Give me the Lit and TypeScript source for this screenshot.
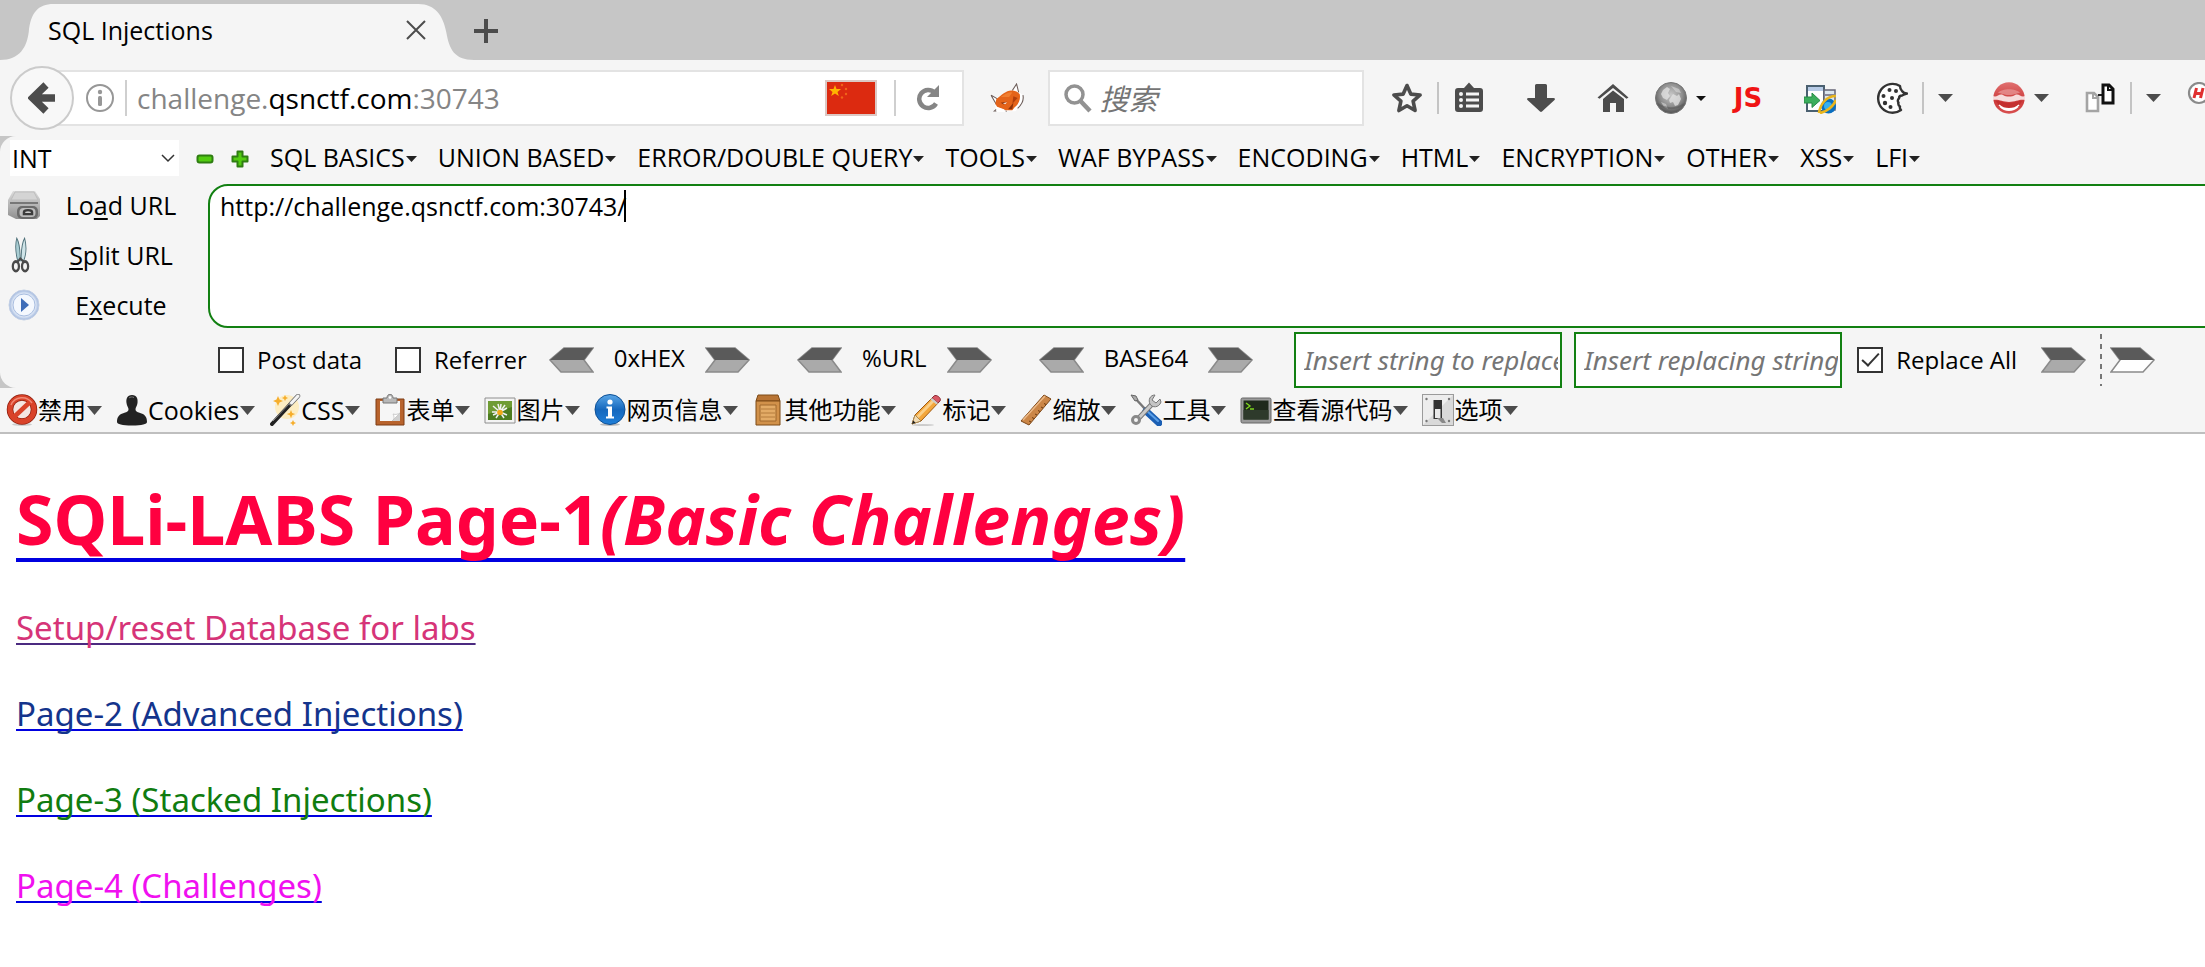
import { LitElement, html, svg, css } from 'lit';
import { customElement, state } from 'lit/decorators.js';

const icons: Record<string, unknown> = {
  star: svg`<path d="M16 3.5l3.8 8.6 9.3.9-7 6.2 2 9.3-8.1-4.8-8.1 4.8 2-9.3-7-6.2 9.3-.9z" fill="none" stroke="#4c4c4c" stroke-width="3.6" stroke-linejoin="round"/>`,
  clipboard: svg`<path d="M5 6h6l5-5.500 5 5.500h6a3 3 0 0 1 3 3v18a3 3 0 0 1-3 3H5a3 3 0 0 1-3-3V9a3 3 0 0 1 3-3z" fill="#4c4c4c"/><g fill="#f5f5f5"><circle cx="8" cy="12" r="2"/><circle cx="8" cy="18" r="2"/><circle cx="8" cy="24" r="2"/><path d="M13 10.500h13v3H13zM13 16.500h13v3H13zM13 22.500h13v3H13z"/></g>`,
  down: svg`<path d="M11.500 2h9a1.500 1.500 0 0 1 1.500 1.500V16h6.500c1.500 0 2 1 1 2L17 29.500c-.6.6-1.400.6-2 0L2.500 18c-1-1-.5-2 1-2H10V3.500A1.500 1.500 0 0 1 11.500 2z" fill="#4c4c4c"/>`,
  home: svg`<path d="M16 2L.5 15.500l2 1.300L16 6l13.500 10.800 2-1.300z" fill="#4c4c4c"/><path d="M16 8.500L6 17v13h7v-9h6v9h8V17z" fill="#4c4c4c"/>`,
  globe: svg`<defs><radialGradient id="gg" cx=".5" cy=".4" r=".6"><stop offset="0" stop-color="#c8c8c8"/><stop offset=".6" stop-color="#8f8f8f"/><stop offset="1" stop-color="#505050"/></radialGradient></defs><circle cx="16" cy="16" r="15.500" fill="url(#gg)" stroke="#777"/><path d="M8 8l4-3 3 2-2 4 2 3-3 4-4-2-2-4zM18 12l4 2 2-2 2 5-3 6-3 1-2-4-3 1-1-3z" fill="#e4e4e4" opacity=".75"/><path d="M16 4l8 3 2 4-5-1zM6 20l5 2 2 5-4-2z" fill="#d8d8d8" opacity=".6"/><path d="M3 22c7 5 18 6 26 0" stroke="#555" stroke-width="2" fill="none" opacity=".5"/>`,
  window: svg`<rect x="3" y="4" width="17" height="25" fill="#fff" stroke="#4a6070" stroke-width="2"/><rect x="4" y="5" width="15" height="4" fill="#b7cbe6"/><rect x="20" y="8" width="11" height="20" fill="#dbe6ee" stroke="#667" stroke-width="1.500"/><path d="M21 12h9v2h-9z" fill="#889"/><path d="M0 15h8v-4l8 7.500-8 7V21H0z" fill="#3cae5c" stroke="#278a45"/><circle cx="24.500" cy="24" r="7.500" fill="#0a6fc0"/><circle cx="24" cy="24" r="4" fill="#35b0f0"/><path d="M15 31C16 23 22 14 32 14M16 31c6-1 13-6 16-13" stroke="#e9b51c" stroke-width="2.600" fill="none"/>`,
  cookie: svg`<path d="M24 4A14.400 14.400 0 1 0 25 28c-1-1-1.500-2-1-3.500-1.500-1-2-2.500-1.500-4-1-1-1-3 .5-4 0-2 1.500-3 3-3 1.500-1 3.500-1.500 5-2-2 0-4-1-5-2.500-1-1-2-3-2-5z" fill="#fff" stroke="#333" stroke-width="2.400" stroke-linejoin="round"/><g fill="#333"><circle cx="13.500" cy="8" r="2"/><circle cx="20" cy="9" r="2"/><circle cx="7.500" cy="14" r="2"/><circle cx="16" cy="16" r="2"/><circle cx="9" cy="21" r="2.200"/><circle cx="14.500" cy="25" r="2"/></g>`,
  redface: svg`<defs><linearGradient id="rg" x1="0" y1="0" x2="0" y2="1"><stop offset="0" stop-color="#e07070"/><stop offset=".6" stop-color="#cc3a3a"/><stop offset="1" stop-color="#d85050"/></linearGradient></defs><circle cx="16" cy="16" r="15.700" fill="url(#rg)"/><path d="M0 14c4 2 6-3 10-1 3 2 9 2 12 0 4-2 6 3 10 1v4c-6-1-9 2-16 2S6 17 0 18z" fill="#f6dcdc"/><path d="M5 11c4-5 18-5 22 0-4 0-5 2-11 2S9 11 5 11z" fill="#e89a9a" opacity=".7"/><path d="M3 19c6 0 8 2 13 2s7-2 13-2c-3 6-8 8-13 8S6 25 3 19z" fill="#c42f2f"/><path d="M6 23c5 5 15 5 20 0M7 24.500c5 5 13 5 18 0" stroke="#fff" stroke-width="1.400" fill="none"/>`,
  pages: svg`<path d="M3 11h7l4 4v14H3z" fill="#fff" stroke="#a4a4a4" stroke-width="2.600"/><path d="M9 11v5h5" fill="none" stroke="#a4a4a4" stroke-width="2"/><path d="M14 13h6" stroke="#222" stroke-width="2"/><path d="M19 3h6l4 4v14H19z" fill="#fff" stroke="#111" stroke-width="3"/><path d="M24 3v5h5" fill="none" stroke="#111" stroke-width="2"/>`,
  hackmag: svg`<path d="M19 19l10 10" stroke="#445" stroke-width="4"/><circle cx="12" cy="11" r="10" fill="#fff" stroke="#8a8a8a" stroke-width="2.200"/><path d="M9.500 6L7 16M16 6l-2.500 10M8.500 11.500h7" stroke="#e03030" stroke-width="3" fill="none"/>`,
  fox: svg`<path d="M1 13l5 3 7-5 8-4 4-6 3 9 3 3-1 9-6 8H6l-1-6z" fill="#fff"/><path d="M1 13l6 4M1 13l5 10M21 8l4-7 2 9M31 13c1 5-1 10-5 14M6 28l-2 2h12" fill="none" stroke="#6b5c58"/><path d="M6 17c5-4 9-9 14-9 3 0 6 1 8 4 1 5-1 11-5 14l-2 3h-6l-8-3-2-4z" fill="#e4641a"/><path d="M10 15c4-3 7-6 11-5l-3 5z" fill="#f07e30"/><path d="M22 14l-1 8 5-6z" fill="#b03e0c"/><path d="M17 28l5-7-1 7zM10 21l6-1-3 3z" fill="#8d3209"/><path d="M12 21.500l4-1-1.500 2z" fill="#fff"/><path d="M6 25l7 3 2 3H6z" fill="#fff"/>`,
  loader: svg`<defs><linearGradient id="lg" x1="0" y1="0" x2="0" y2="1"><stop offset="0" stop-color="#dcdcdc"/><stop offset="1" stop-color="#8f8f8f"/></linearGradient></defs><path d="M5 2h22l5 8v17l-3 3H8l-8-4V11z" fill="url(#lg)"/><path d="M7 3h19l4 8H3z" fill="#d4d4d4" stroke="#bdbdbd"/><path d="M2 14h28" stroke="#777" stroke-width="2"/><rect x="9" y="17" width="21" height="13" rx="5" fill="#6a6a6a"/><rect x="11.500" y="19" width="16" height="9" rx="4" fill="#bdbdbd"/><path d="M16 25v-2c0-2.500 8-2.500 8 0v2z" stroke="#3c3c3c" stroke-width="2.500" fill="#fff"/>`,
  scissors: svg`<path d="M10 1c3 4 4 11 4 20h-3C9 15 8 7 10 1z" fill="#a9cdd3" stroke="#4d6f78"/><path d="M19 1c-3 4-4 11-4 20h3c3-6 3-14 1-20z" fill="#cfe4e8" stroke="#4d6f78"/><ellipse cx="9" cy="26" rx="3.500" ry="4.300" fill="none" stroke="#4a4a4a" stroke-width="2.600"/><ellipse cx="19.500" cy="26" rx="3.500" ry="4.300" fill="none" stroke="#4a4a4a" stroke-width="2.600"/><path d="M11 22l3-3 4 3" stroke="#4a4a4a" stroke-width="2" fill="none"/>`,
  play: svg`<defs><radialGradient id="pg"><stop offset=".5" stop-color="#fff"/><stop offset=".8" stop-color="#d7e2f3"/><stop offset="1" stop-color="#9db4db"/></radialGradient></defs><circle cx="16" cy="16" r="15" fill="url(#pg)" stroke="#c3d0e6"/><circle cx="16" cy="16" r="11" fill="#f4f8fe" stroke="#a8bde0"/><path d="M13 9l8 7-8 7z" fill="#3d6cb8"/>`,
  ban: svg`<ellipse cx="16" cy="30.500" rx="10" ry="1.500" fill="#ccc"/><circle cx="16" cy="15.500" r="12" fill="#f4e6e2" stroke="#8f1d0c" stroke-width="6.500"/><circle cx="16" cy="15.500" r="12" fill="none" stroke="#d9432a" stroke-width="5"/><path d="M24 8L8 23" stroke="#d9432a" stroke-width="4.500"/><path d="M5 11a12 12 0 0 1 21-2" stroke="#f08a76" stroke-width="1.500" fill="none"/>`,
  person: svg`<path d="M16 1c5 0 6 4 5.500 8-.4 3-1.800 4-2 6 0 3 2 3 6 4.500 4 1.500 5.500 4 5.500 8.500 0 2-5 3.500-15 3.500S1 30 1 28c0-4.500 1.500-7 5.500-8.500 4-1.500 6-1.500 6-4.500-.2-2-1.600-3-2-6C10 5 11 1 16 1z" fill="#222"/><path d="M13 4c1-1 3-1.500 5-.5" stroke="#777" fill="none"/>`,
  wand: svg`<circle cx="18" cy="13" r="12" fill="#ffe9b0" opacity=".75"/><path d="M9 2l1.500 3.500L14 7l-3.500 1.500L9 12 7.500 8.500 4 7l3.500-1.500zM22 16l1.200 3 3 1-3 1.200-1.200 3-1.200-3-3-1.200 3-1zM16 1l1 2 2 1-2 1-1 2-1-2-2-1 2-1zM24 26l1 2 2 1-2 1-1 2-1-2-2-1 2-1z" fill="#f6ae2d"/><path d="M3 30L28 3" stroke="#222" stroke-width="4" stroke-linecap="round"/><path d="M22 9.500L29 2" stroke="#777" stroke-width="4.500" stroke-linecap="round"/><path d="M22.500 9L29 2" stroke="#f4f4f4" stroke-width="3" stroke-linecap="round"/><path d="M4 27L21 9" stroke="#888" stroke-width="1"/>`,
  form: svg`<path d="M2 5h28v26H2z" fill="#b8632c" stroke="#7c3c14"/><path d="M6 7h20v20H6z" fill="#f6f6f6"/><path d="M18 27l8-8v8z" fill="#cfcfcf"/><path d="M18 27c3-2 2-5 1-7 3 1 5 0 7-1z" fill="#fff" stroke="#c0c0c0" stroke-width=".8"/><path d="M9 4h4c0-5 6-5 6 0h4v5H9z" fill="#b8b8b8" stroke="#777"/><circle cx="16" cy="3.500" r="1.300" fill="#fff"/>`,
  photo: svg`<path d="M1 4h30v25H1z" fill="#f4f4f4" stroke="#8e8e8e"/><path d="M4 7h24v19H4z" fill="#4d7d20"/><path d="M4 7h24v6L4 20z" fill="#6f9c34"/><path d="M16 18L9 12M16 18l-2-8M16 18l5-7M16 18l7-4M16 18l7 3M16 18l4 6M16 18l-4 6M16 18l-7 3M16 18H8M16 18l1-8" stroke="#f2f2f2" stroke-width="1.500"/><circle cx="16" cy="18.500" r="2.800" fill="#f0a818"/>`,
  info: svg`<defs><linearGradient id="ig" x1="0" y1="0" x2="0" y2="1"><stop offset="0" stop-color="#5aa7e8"/><stop offset=".5" stop-color="#1668bd"/><stop offset="1" stop-color="#1f7fd8"/></linearGradient></defs><ellipse cx="16" cy="30.500" rx="10" ry="1.500" fill="#bbb"/><circle cx="16" cy="15.500" r="15" fill="url(#ig)" stroke="#0d4f94"/><circle cx="16" cy="8" r="2.600" fill="#fff"/><path d="M12.500 12.500h5.500v10h2v2h-8v-2h2v-8h-1.500z" fill="#fff"/>`,
  crate: svg`<path d="M6 1h20l2 6H4z" fill="#b87434" stroke="#7d4a17"/><path d="M4 7h24v24H4z" fill="#d1914a" stroke="#7d4a17"/><path d="M8 11h16v16H8z" fill="#e3ab66" stroke="#a0682c"/><path d="M9 15h14M9 19h14M9 23h14" stroke="#b57c3c"/>`,
  pencil: svg`<ellipse cx="13" cy="31" rx="11" ry="1" fill="#ccc"/><path d="M2 30l3-9L24 2l6 5-19 20z" fill="#f3a63b" stroke="#a05a12"/><path d="M6.500 22L25 3l2 2L8.500 24z" fill="#fbd08a"/><path d="M2 30l3-9 6 6z" fill="#f2dcb4" stroke="#a98a55"/><path d="M2 30l1.200-3.500 2.300 2.300z" fill="#222"/><path d="M22 4l2-2c2-2 8 2 6 5l-2 2z" fill="#d95763" stroke="#8c2c36"/><path d="M20.500 5.500L22 4l6 5-1.500 1.500z" fill="#ccc"/>`,
  ruler: svg`<path d="M1 27L24 1l7 4L9 31z" fill="#cb8647" stroke="#7d4717"/><path d="M3 26L25 2" stroke="#ecb987" stroke-width="1.500"/><path d="M11 28l-2-1M14 24.500l-2-1M17 21l-2-1M20 17.500l-2-1M23 14l-2-1M26 10.500l-2-1" stroke="#6e3c10"/>`,
  tools: svg`<path d="M3 2l13 14" stroke="#777" stroke-width="2.500"/><path d="M1 1l5 1 2 4-3 1z" fill="#aaa" stroke="#666"/><path d="M16 17l13 12" stroke="#1b5fb4" stroke-width="7" stroke-linecap="round"/><path d="M17 17l11 10" stroke="#5a9fe8" stroke-width="2" stroke-linecap="round"/><path d="M7 26L23 9" stroke="#777" stroke-width="5"/><path d="M7 26L23 9" stroke="#c9c9c9" stroke-width="3"/><circle cx="6" cy="26" r="3.500" fill="#f5f5f5" stroke="#888" stroke-width="3"/><path d="M25 1c-5 0-7 5-5 9s9 4 11-2l-1-3-4 4-4-3z" fill="#c4c4c4" stroke="#777"/>`,
  terminal: svg`<rect x="1" y="4" width="30" height="25" rx="1.500" fill="#9a9a9a" stroke="#666"/><rect x="3.500" y="6.500" width="25" height="19" fill="#1f2a1c"/><path d="M3.500 16h25v9.500h-25z" fill="#2e3a2b"/><path d="M6 9l4 3-4 3M10 15h4" stroke="#7ed321" stroke-width="1.400" fill="none"/>`,
  toggle: svg`<rect x=".5" y=".5" width="31" height="31" fill="#d9d9d9" stroke="#9b9b9b"/><path d="M1 1h30L1 31z" fill="#ededed"/><rect x="11.500" y="6" width="8.500" height="19" fill="#333"/><rect x="13" y="15" width="5.500" height="9" fill="#e8e8e8"/><path d="M15 24h6l3 5h-4z" fill="#888"/><g fill="#777"><circle cx="4.500" cy="5" r="1.200"/><circle cx="27" cy="5" r="1.200"/><circle cx="4.500" cy="27" r="1.200"/><circle cx="27" cy="27" r="1.200"/></g>`,
};

const icon = (name: string, cls = 'icon') =>
  html`<svg class=${cls} viewBox="0 0 32 32" preserveAspectRatio="none" aria-hidden="true">${icons[name]}</svg>`;

const caret = (cls: string) =>
  html`<svg class=${cls} viewBox="0 0 14 9" preserveAspectRatio="none" aria-hidden="true"><path d="M0 0h14L7 9z" fill="currentColor"/></svg>`;

@customElement('tab-strip')
export class TabStrip extends LitElement {
  static styles = css`
    :host { display: flex; height: 60px; background: #c6c6c6; padding-top: 4px; box-sizing: border-box; align-items: stretch; }
    .tab { display: grid; grid-template-columns: 474px; }
    .shape, .content { grid-area: 1 / 1; }
    .shape { width: 100%; height: 56px; display: block; }
    .content { display: flex; align-items: center; justify-content: space-between; padding: 0 48px 4px; font-size: 25px; line-height: 32px; }
    button { border: 0; background: none; padding: 0; display: flex; }
    .close { width: 20px; height: 20px; }
    .add { align-items: flex-start; padding-top: 15px; }
    .plus { width: 24px; height: 24px; }
  `;
  render() {
    return html`
      <div class="tab">
        <svg class="shape" viewBox="0 0 478 56" preserveAspectRatio="none" aria-hidden="true">
          <path d="M0 56C20 56 27 43 29 28 31 9 38 0 54 0H422c17 0 25 12 28 28 3 17 8 28 28 28z" fill="#f5f5f5"/>
        </svg>
        <div class="content">
          <span>SQL Injections</span>
          <button aria-label="Close tab"><svg class="close" viewBox="0 0 20 20"><path d="M1 1l18 18M19 1L1 19" stroke="#4c4c4c" stroke-width="2"/></svg></button>
        </div>
      </div>
      <button class="add" aria-label="New tab"><svg class="plus" viewBox="0 0 24 24"><path d="M12 0v24M0 12h24" stroke="#4c4c4c" stroke-width="4"/></svg></button>
    `;
  }
}

@customElement('nav-bar')
export class NavBar extends LitElement {
  static styles = css`
    :host { display: flex; align-items: center; height: 76px; background: #f5f5f5; overflow: hidden; padding-left: 10px; box-sizing: border-box; }
    button { border: 0; background: none; padding: 0; display: flex; color: #4c4c4c; font: inherit; }
    .back { width: 64px; height: 64px; box-sizing: border-box; border: 2px solid #cbcbcb; border-radius: 50%; background: #f8f8f8; align-items: center; justify-content: center; z-index: 1; flex: none; }
    .back svg { width: 28px; height: 32px; }
    .urlbar { flex: 853 1 0; min-width: 0; display: flex; align-items: center; height: 56px; box-sizing: border-box; border: 2px solid #e3e3e3; background: #fff; margin-left: -32px; padding: 0 22px 0 41px; }
    .info { width: 30px; height: 30px; }
    .line { width: 2px; height: 36px; background: #cfcfcf; flex: none; }
    .info + .line { margin: 0 10px; }
    .address { flex: 1; font-size: 28px; line-height: 38px; color: #858585; white-space: nowrap; }
    .address b { font-weight: 400; color: #000; }
    .flag { width: 52px; height: 36px; margin-right: 17px; }
    .reload { margin-left: 20px; }
    .reload svg { width: 24px; height: 26px; }
    .fox { width: 34px; height: 30px; margin: 0 24px 0 26px; flex: none; }
    .search { flex: 284 1 0; min-width: 0; display: flex; align-items: center; gap: 8px; height: 56px; box-sizing: border-box; border: 2px solid #e3e3e3; background: #fff; padding: 0 14px; }
    .search svg { width: 28px; height: 30px; flex: none; }
    .search input { flex: 1; min-width: 0; border: 0; outline: 0; padding: 0; background: none; font: italic 29px "Open Sans", "Noto Sans CJK SC", sans-serif; }
    .search input::placeholder { color: #757575; opacity: 1; }
    .actions { display: flex; align-items: center; flex: none; margin: 0 -14px 0 27px; }
    .icon { width: 32px; height: 32px; }
    .sep { width: 2px; height: 32px; background: #c4c4c4; margin-left: 14px; }
    .gap { margin-left: 40px; }
    .near { margin-left: 35px; }
    .mid { margin-left: 26px; }
    .tight { margin-left: 14px; }
    .split { align-items: center; gap: 9px; }
    .small { width: 10px; height: 5px; color: #111; }
    .big { width: 15px; height: 8px; }
    .js { font: bold 26px/32px "DejaVu Sans", sans-serif; color: #f01414; width: 32px; justify-content: center; }
  `;
  render() {
    return html`
      <button class="back" aria-label="Back"><svg viewBox="0 0 28 32"><path d="M18 3L4.500 16 18 29M5 16h22" fill="none" stroke="#4c4c4c" stroke-width="7.500"/></svg></button>
      <div class="urlbar">
        <svg class="info" viewBox="0 0 30 30" aria-hidden="true"><circle cx="15" cy="15" r="13" fill="none" stroke="#979797" stroke-width="2"/><circle cx="15" cy="9" r="2.200" fill="#979797"/><rect x="13" y="13" width="4" height="10" rx="1.500" fill="#979797"/></svg>
        <span class="line"></span>
        <span class="address">challenge.<b>qsnctf.com</b>:30743</span>
        <svg class="flag" viewBox="0 0 52 36" aria-label="China"><rect x="1" y="1" width="50" height="34" fill="#dc2a10" stroke="#dcc8c4" stroke-width="2"/><path d="M10 5l1.500 4H16l-3.500 3 1.300 4L10 13.500 6.200 16l1.300-4L4 9h4.500z" fill="#ffb400"/><g fill="#f0641a"><circle cx="17" cy="5" r="1.200"/><circle cx="21" cy="9" r="1.200"/><circle cx="21" cy="14" r="1.200"/><circle cx="17" cy="17.500" r="1.200"/></g></svg>
        <span class="line"></span>
        <button class="reload" aria-label="Reload"><svg viewBox="0 0 24 26"><path d="M20 18.500A9 9 0 1 1 18.500 7.500" fill="none" stroke="#858585" stroke-width="4.500"/><path d="M23 0v12H11z" fill="#858585"/></svg></button>
      </div>
      ${icon('fox', 'fox')}
      <label class="search">
        <svg viewBox="0 0 28 30" aria-hidden="true"><circle cx="10.500" cy="11.500" r="8.500" fill="none" stroke="#929292" stroke-width="3.500"/><path d="M16.500 18l9.500 10" stroke="#929292" stroke-width="4.500"/></svg>
        <input type="text" placeholder="搜索" aria-label="搜索">
      </label>
      <div class="actions">
        <button aria-label="Bookmark">${icon('star')}</button>
        <span class="sep"></span>
        <button class="tight" aria-label="Bookmarks list">${icon('clipboard')}</button>
        <button class="gap" aria-label="Downloads">${icon('down')}</button>
        <button class="gap" aria-label="Home">${icon('home')}</button>
        <button class="mid split" aria-label="Proxy">${icon('globe')}${caret('small')}</button>
        <button class="mid js">JS</button>
        <button class="gap" aria-label="Open in other browser">${icon('window')}</button>
        <button class="gap" aria-label="Cookies">${icon('cookie')}</button>
        <span class="sep"></span>
        <button class="tight" aria-label="Cookie menu">${caret('big')}</button>
        <button class="gap split" aria-label="User agent">${icon('redface')}${caret('big')}</button>
        <button class="near" aria-label="Pages">${icon('pages')}</button>
        <span class="sep"></span>
        <button class="tight" aria-label="Pages menu">${caret('big')}</button>
        <button class="mid" aria-label="HackBar">${icon('hackmag')}</button>
      </div>
    `;
  }
}

const MENUS = ['SQL BASICS', 'UNION BASED', 'ERROR/DOUBLE QUERY', 'TOOLS', 'WAF BYPASS', 'ENCODING', 'HTML', 'ENCRYPTION', 'OTHER', 'XSS', 'LFI'];

@customElement('hack-bar')
export class HackBar extends LitElement {
  @state() private url = 'http://challenge.qsnctf.com:30743/';

  static styles = css`
    :host { display: block; background: #c6c6c6; font-size: 25px; line-height: 34px; overflow: hidden; }
    .panel { background: #f5f5f5; border-radius: 16px 0 0 16px; }
    button { border: 0; background: none; padding: 0; font: inherit; color: #000; display: flex; align-items: center; white-space: nowrap; }
    .menus { display: flex; align-items: center; height: 48px; padding: 0 0 6px 10px; box-sizing: border-box; }
    .picker { display: grid; width: 169px; align-items: center; margin-top: 2px; }
    .picker select, .picker svg { grid-area: 1 / 1; }
    .picker select { appearance: none; border: 0; border-radius: 0; background: #fff; height: 36px; padding: 0 2px; font: inherit; color: #000; }
    .picker svg { justify-self: end; width: 14px; height: 9px; margin-right: 4px; pointer-events: none; }
    .minus, .plus { width: 18px; height: 18px; }
    .steps { display: flex; gap: 17px; margin: 4px 21px 0 17px; }
    .items { display: flex; gap: 21px; }
    .mini { width: 11px; height: 6px; margin: 4px 0 0 1px; color: #222; }
    .body { display: grid; grid-template-columns: 208px 1fr; height: 144px; }
    .cmds { display: flex; flex-direction: column; justify-content: space-between; padding-bottom: 2px; }
    .cmds button { display: grid; grid-template-columns: 32px 146px; gap: 8px; padding-left: 8px; height: 42px; text-align: center; }
    .cmds .icon { width: 32px; height: 32px; }
    .cmds .thin { width: 28px; height: 36px; }
    u { text-underline-offset: 3px; text-decoration-thickness: 2px; text-decoration-skip-ink: none; }
    .field { position: relative; margin-right: -24px; display: flex; }
    textarea { flex: 1; border: 2px solid #128012; border-radius: 20px; resize: none; outline: 0; padding: 3px 10px; box-sizing: border-box; font: inherit; color: #000; background: #fff; }
    .cursor { position: absolute; left: 416px; top: 6px; width: 2px; height: 32px; background: #000; }
    .row { display: flex; align-items: center; height: 60px; padding: 4px 0 0 218px; box-sizing: border-box; white-space: nowrap; font-size: 24px; }
    label { display: flex; align-items: center; gap: 13px; }
    .check { appearance: none; width: 26px; height: 26px; margin: 0; border: 2px solid #333; background: #fff; display: grid; place-items: center; }
    .check:checked::after { content: ""; width: 15px; height: 7px; border: solid #333; border-width: 0 0 2px 2px; transform: rotate(-47deg); margin-bottom: 5px; }
    label + label { margin-left: 33px; }
    .conv { display: flex; align-items: center; gap: 20px; margin-left: 22px; }
    .conv + .conv { margin-left: 47px; }
    .conv span { padding-bottom: 4px; }
    .arrow { width: 45px; height: 26px; display: block; }
    .text { width: 268px; height: 56px; box-sizing: border-box; border: 2px solid #128012; padding: 0 2px 0 8px; background: #fff; outline: 0; font: italic 26px "Noto Sans", sans-serif; }
    .text::placeholder { color: #757575; opacity: 1; }
    .conv + .text { margin-left: 41px; }
    .text + .text { margin-left: 12px; }
    .text + label { margin-left: 15px; }
    .go { margin-left: 24px; }
    .dash { width: 2px; height: 52px; background: repeating-linear-gradient(#777 0 5px, #f5f5f5 5px 10px); margin: 0 8px 0 14px; }
  `;

  private arrow(flip = false, hollow = false) {
    return html`<svg class="arrow" viewBox="0 0 45 26" aria-hidden="true">
      <defs><linearGradient id="top" x1="0" y1="0" x2="0" y2="1"><stop offset="0" stop-color="#7a7a7a"/><stop offset=".18" stop-color="#454545"/><stop offset=".5" stop-color="#6e6e6e"/></linearGradient></defs>
      <path d=${flip ? 'M44 1H15L1 13l11 12h32L35 13z' : 'M1 1h29l14 12-11 12H1l9-12z'} fill=${hollow ? '#fff' : '#aaa'} stroke="#8a8a8a" stroke-width="1.500"/>
      <path d=${flip ? 'M44 1H15L1 13h34z' : 'M1 1h29l14 12H10z'} fill="#5a5a5a"/></svg>`;
  }

  private converter(name: string) {
    return html`<div class="conv"><button aria-label="Decode ${name}">${this.arrow(true)}</button><span>${name}</span><button aria-label="Encode ${name}">${this.arrow()}</button></div>`;
  }

  render() {
    return html`<div class="panel">
      <div class="menus">
        <div class="picker">
          <select aria-label="Injection type"><option>INT</option></select>
          <svg viewBox="0 0 14 9" aria-hidden="true"><path d="M1 1l6 6 6-6" fill="none" stroke="#333" stroke-width="1.500"/></svg>
        </div>
        <div class="steps">
          <button aria-label="Decrease"><svg class="minus" viewBox="0 0 18 18"><rect x="1.500" y="5.500" width="15" height="7" rx="2" fill="#52cc10" stroke="#2f7d12" stroke-width="2"/></svg></button>
          <button aria-label="Increase"><svg class="plus" viewBox="0 0 18 18"><path d="M6.500 1.500h5v5h5v5h-5v5h-5v-5h-5v-5h5z" fill="#52cc10" stroke="#2f7d12" stroke-width="2" stroke-linejoin="round"/></svg></button>
        </div>
        <div class="items">${MENUS.map((m) => html`<button>${m}${caret('mini')}</button>`)}</div>
      </div>
      <div class="body">
        <div class="cmds">
          <button>${icon('loader')}<span>Lo<u>a</u>d URL</span></button>
          <button>${icon('scissors', 'thin')}<span><u>S</u>plit URL</span></button>
          <button>${icon('play')}<span>E<u>x</u>ecute</span></button>
        </div>
        <div class="field">
          <textarea aria-label="URL" spellcheck="false" .value=${this.url}></textarea>
          <span class="cursor"></span>
        </div>
      </div>
      <div class="row">
        <label><input class="check" type="checkbox">Post data</label>
        <label><input class="check" type="checkbox">Referrer</label>
        ${['0xHEX', '%URL', 'BASE64'].map((n) => this.converter(n))}
        <input class="text" type="text" placeholder="Insert string to replace" aria-label="Insert string to replace">
        <input class="text" type="text" placeholder="Insert replacing string" aria-label="Insert replacing string">
        <label><input class="check" type="checkbox" checked>Replace All</label>
        <button class="go" aria-label="Replace">${this.arrow()}</button>
        <span class="dash"></span>
        <button aria-label="Next">${this.arrow(false, true)}</button>
      </div>
    </div>`;
  }
}

const TOOLS: [string, string][] = [
  ['ban', '禁用'], ['person', 'Cookies'], ['wand', 'CSS'], ['form', '表单'], ['photo', '图片'], ['info', '网页信息'],
  ['crate', '其他功能'], ['pencil', '标记'], ['ruler', '缩放'], ['tools', '工具'], ['terminal', '查看源代码'], ['toggle', '选项'],
];

@customElement('dev-toolbar')
export class DevToolbar extends LitElement {
  static styles = css`
    :host { display: flex; gap: 14px; height: 46px; box-sizing: border-box; padding-left: 6px; background: #f5f5f5; border-bottom: 2px solid #bfbfbf; font-size: 24px; line-height: 32px; }
    button { border: 0; background: none; padding: 0; font: inherit; color: #000; display: flex; align-items: center; white-space: nowrap; }
    .latin { font-size: 25px; }
    .icon { width: 32px; height: 32px; }
    .drop { width: 15px; height: 9px; margin-left: 1px; color: #4c4c4c; }
  `;
  render() {
    return TOOLS.map(([i, t]) => html`<button class=${/^[A-Z]/.test(t) ? 'latin' : 'cjk'}>${icon(i)}${t}${caret('drop')}</button>`);
  }
}

@customElement('labs-page')
export class LabsPage extends LitElement {
  static styles = css`
    :host { display: flex; flex-direction: column; align-items: flex-start; padding: 39px 16px; background: #fff; font-family: "Noto Sans", sans-serif; }
    h1 { margin: 0; font-size: 68px; line-height: 92px; }
    a { text-decoration: underline 2px #0000e0; text-underline-offset: 3px; text-decoration-skip-ink: none; white-space: nowrap; }
    h1 a { color: #ff0040; text-decoration-thickness: 4px; text-underline-offset: 13px; }
    .link { font-size: 33px; line-height: 46px; margin-top: 40px; }
    .setup { color: #d63478; text-decoration-color: #4b2a80; }
    .two { color: #14348c; }
    .three { color: #107c10; }
    .four { color: #f010f0; }
  `;
  render() {
    return html`
      <h1><a href="#page-1">SQLi-LABS Page-1<em>(Basic Challenges)</em></a></h1>
      <a class="link setup" href="#setup">Setup/reset Database for labs</a>
      <a class="link two" href="#page-2">Page-2 (Advanced Injections)</a>
      <a class="link three" href="#page-3">Page-3 (Stacked Injections)</a>
      <a class="link four" href="#page-4">Page-4 (Challenges)</a>
    `;
  }
}

@customElement('app-root')
export class AppRoot extends LitElement {
  static styles = css`
    :host { display: block; min-height: 100vh; overflow: hidden; background: #fff; color: #000; font-family: "Open Sans", "Noto Sans CJK SC", sans-serif; }
  `;
  render() {
    return html`<tab-strip></tab-strip><nav-bar></nav-bar><hack-bar></hack-bar><dev-toolbar></dev-toolbar><labs-page></labs-page>`;
  }
}
